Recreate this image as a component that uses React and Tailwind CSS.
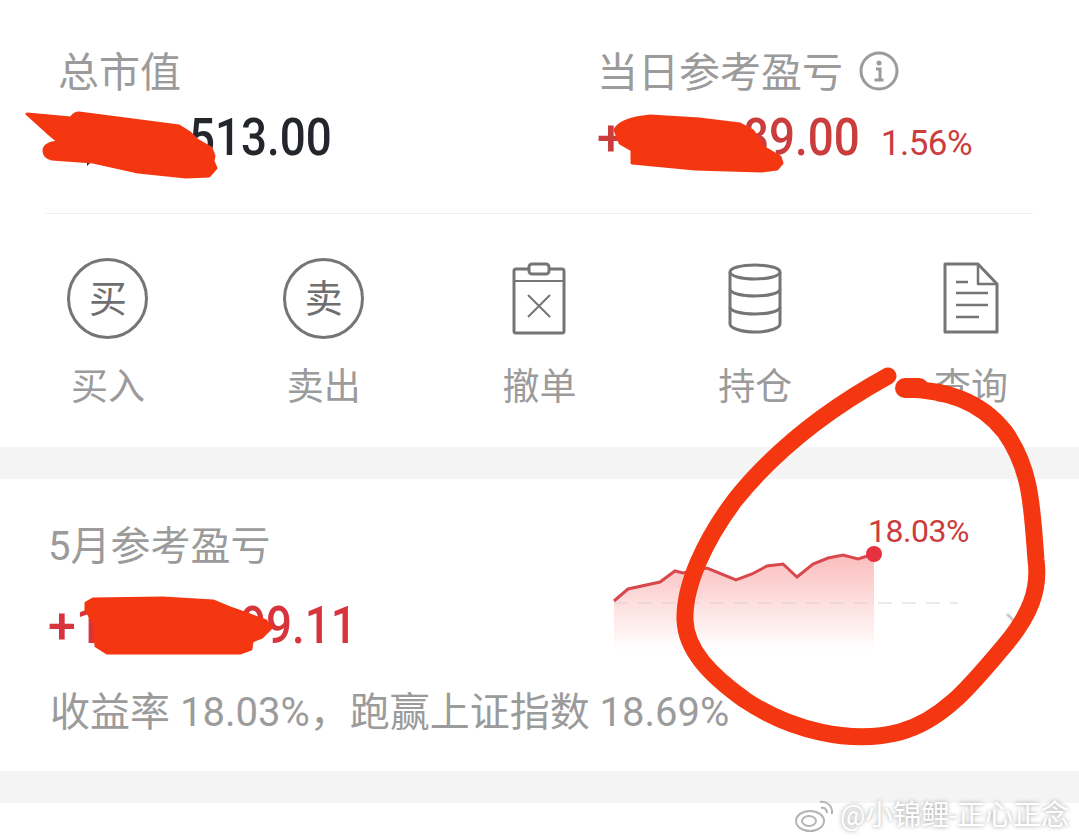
import React from 'react';

const FONT = "font-['Roboto','Noto_Sans_CJK_SC',sans-serif]";
const BIG = 'inline-block origin-left scale-x-[0.88] text-[52px] leading-[60px] font-medium whitespace-nowrap';

const Clipboard = () => (
  <svg width="56" height="76" viewBox="0 0 56 76" fill="none" stroke="#757575" strokeWidth="3" strokeLinejoin="round">
    <rect x="3" y="8" width="50" height="64" rx="2" />
    <rect x="18" y="3" width="20" height="10" rx="3" fill="#fff" />
    <path d="M3 20h50" strokeWidth="2" />
    <path d="M17 34l22 22M39 34L17 56" strokeWidth="2" />
  </svg>
);

const Database = () => (
  <svg width="56" height="74" viewBox="0 0 56 74" fill="none" stroke="#757575" strokeWidth="3">
    <ellipse cx="28" cy="10" rx="25" ry="7" />
    <path d="M3 10v52c0 4 11 8 25 8s25-4 25-8V10" />
    <path d="M3 27c0 4 11 7 25 7s25-3 25-7" />
    <path d="M3 45c0 4 11 7 25 7s25-3 25-7" />
  </svg>
);

const Doc = () => (
  <svg width="56" height="74" viewBox="0 0 56 74" fill="none" stroke="#757575" strokeWidth="3" strokeLinejoin="round">
    <path d="M2 2h33l19 20v48H2z" />
    <path d="M35 2v20h19" strokeWidth="2.5" />
    <path d="M13 20h12M13 31h32M13 43h32M13 55h23" strokeWidth="2.5" />
  </svg>
);

const Ring = ({ char }) => (
  <div className="w-[81px] h-[81px] rounded-full border-[3px] border-[#757575] flex items-center justify-center text-[38px] text-[#6f6f6f] leading-none">
    {char}
  </div>
);

const actions = [
  { label: '买入', icon: <Ring char="买" /> },
  { label: '卖出', icon: <Ring char="卖" /> },
  { label: '撤单', icon: <Clipboard /> },
  { label: '持仓', icon: <Database /> },
  { label: '查询', icon: <Doc /> },
];

const Chart = () => (
  <svg width="350" height="130" viewBox="0 0 350 130" fill="none">
    <defs>
      <linearGradient id="area" x1="0" y1="0" x2="0" y2="1">
        <stop offset="0" stopColor="#fbbcbc" />
        <stop offset="1" stopColor="#ffffff" />
      </linearGradient>
    </defs>
    <path
      d="M1 67L15 55L47 48L62 37L70 39L94 34L123 46L139 40L154 32L170 30L184 43L200 30L215 24L230 21L245 25L261 20V116H1Z"
      fill="url(#area)"
    />
    <path d="M1 69H345" stroke="#d9d4d4" strokeWidth="1" strokeDasharray="14 10" />
    <path
      d="M1 67L15 55L47 48L62 37L70 39L94 34L123 46L139 40L154 32L170 30L184 43L200 30L215 24L230 21L245 25L261 20"
      stroke="#d9484d"
      strokeWidth="3"
    />
    <circle cx="261" cy="20" r="8" fill="#e5323e" />
  </svg>
);

export default function App() {
  return (
    <div className={`${FONT} relative w-[1079px] h-[839px] overflow-hidden bg-white`}>
      {/* top stats */}
      <div className="mx-[46px] h-[214px] border-b border-[#eeeeee] grid grid-cols-[551px_1fr] pt-[49px]">
        <div className="pl-[12px]">
          <div className="text-[41px] leading-[48px] text-[#9b9b9b]">总市值</div>
          <div className="mt-[11px] pl-[131px] text-[#23262b]">
            <span className={BIG}>513.00</span>
          </div>
        </div>
        <div>
          <div className="flex items-center text-[41px] leading-[48px] text-[#9b9b9b]">
            <span>当日参考盈亏</span>
            <svg className="ml-[16px] -mt-[4px]" width="40" height="40" viewBox="0 0 40 40" fill="none" stroke="#9b9b9b">
              <circle cx="20" cy="20" r="18" strokeWidth="3" />
              <circle cx="20" cy="12" r="2.5" fill="#9b9b9b" stroke="none" />
              <path d="M17 18h4v11M15.5 29h9" strokeWidth="3" />
            </svg>
          </div>
          <div className="mt-[11px] flex items-baseline text-[#cb3d3d]">
            <span className="text-[50px] leading-[60px] font-medium">+</span>
            <span className={`${BIG} ml-[118px] w-[112px]`}>89.00</span>
            <span className="ml-[26px] text-[35px] tracking-[-0.5px]">1.56%</span>
          </div>
        </div>
      </div>

      {/* actions */}
      <div className="h-[233px] grid grid-cols-5 pt-[44px]">
        {actions.map((a) => (
          <div key={a.label} className="flex flex-col items-center">
            <div className="h-[81px] flex items-center justify-center">{a.icon}</div>
            <div className="mt-[27px] text-[37px] leading-[44px] text-[#9b9b9b]">{a.label}</div>
          </div>
        ))}
      </div>

      <div className="h-[32px] bg-[#f4f4f4]" />

      {/* monthly card */}
      <div className="h-[292px] relative pl-[48px] pt-[44px]">
        <div className="text-[40px] leading-[48px] text-[#9b9b9b]">5月参考盈亏</div>
        <div className="mt-[25px] flex items-baseline text-[#d8343c]">
          <span className="text-[50px] leading-[60px] font-medium">+1</span>
          <span className={`${BIG} ml-[136px]`}>99.11</span>
        </div>
        <div className="mt-[34px] pl-[2px] text-[40px] leading-[46px] text-[#9b9b9b] whitespace-nowrap">收益率 18.03%，跑赢上证指数 18.69%</div>

        <div className="absolute left-[613px] top-[55px]">
          <Chart />
          <span className="absolute left-[255px] -top-[21px] text-[32px] leading-[36px] text-[#cb3d3d] tracking-[-0.5px]">18.03%</span>
        </div>
        <svg className="absolute left-[1004px] top-[132px]" width="20" height="34" viewBox="0 0 20 34" fill="none" stroke="#cccccc" strokeWidth="3">
          <path d="M3 3l14 14L3 31" />
        </svg>
      </div>

      <div className="h-[32px] bg-[#f4f4f4]" />

      {/* hand drawn marks over the screenshot */}
      <svg className="absolute inset-0 pointer-events-none" width="1079" height="839" viewBox="0 0 1079 839" fill="none">
        <path d="M87 156l8 2-8 8z" fill="#23262b" />
        <g fill="#f43711" stroke="#f43711" strokeWidth="3" strokeLinejoin="round">
          <path d="M27 114L71 118Q74 113 79 113L179 126L190 133L197 140L211 148L214 156L213 161L216 168L209 176L186 177L138 172L93 162L52 159Q44 157 44 151Q44 143 59 142L47 132Z" />
          <path d="M615 130Q620 119 650 116L699 119L740 124L753 131L763 147L780 157L782 163L777 169L761 171L695 169L632 163L632 150L620 143Z" />
          <path d="M86 603L93 599L163 598L213 601L230 608L247 614L266 621L271 628L262 637L252 641L251 649L240 653L163 653L107 653L96 646L94 623L86 610Z" />
        </g>
        <path
          d="M888 376C830 408 775 450 735 500C705 540 684 585 685 620C686 650 710 675 745 700C790 730 850 745 900 732C945 720 975 680 1005 645C1030 615 1040 590 1036 560C1032 510 1032 470 1005 432C980 400 945 390 905 389"
          stroke="#f43711"
          strokeWidth="17"
          strokeLinecap="round"
        />
        <path d="M905 388h14" stroke="#f43711" strokeWidth="20" strokeLinecap="round" />
      </svg>

      {/* watermark */}
      <div className="absolute right-[10px] bottom-[6px] flex items-center gap-[4px] text-[28px] leading-[34px] text-white [text-shadow:0_0_4px_#9a9a9a]">
        <svg width="42" height="34" viewBox="0 0 42 34" fill="none" stroke="#b4b4b4" strokeWidth="2">
          <ellipse cx="16" cy="22" rx="14" ry="10" fill="#fff" />
          <ellipse cx="15" cy="22" rx="7" ry="5" />
          <path d="M26 3c7-1 13 4 12 12M27 9c3-1 6 1 6 5" />
        </svg>
        <span>@小锦鲤-正心正念</span>
      </div>
    </div>
  );
}
